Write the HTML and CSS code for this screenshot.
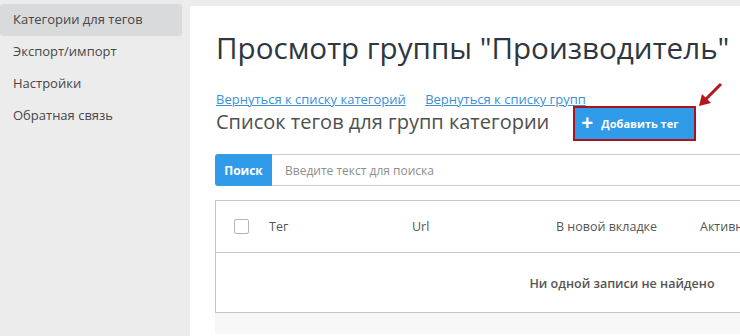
FILE: index.html
```html
<!DOCTYPE html>
<html>
<head lang="ru">
    <meta charset="UTF-8">
    <title>Просмотр группы</title>
    <link rel="stylesheet" href="styles.css">
</head>
<body>

<div class="sidebar">
    <a class="nav active" href="#">Категории для тегов</a>
    <a class="nav" href="#">Экспорт/импорт</a>
    <a class="nav" href="#">Настройки</a>
    <a class="nav" href="#">Обратная связь</a>
</div>

<div class="main">
    <h1 class="title">Просмотр группы "Производитель"</h1>

    <div class="links">
        <a href="#">Вернуться к списку категорий</a>
        <a href="#">Вернуться к списку групп</a>
    </div>

    <div class="head-row">
        <h2 class="subtitle">Список тегов для групп категории</h2>
        <button class="add-btn"><span class="plus">+</span>Добавить тег</button>
        <svg class="arrow" width="30" height="30" viewBox="0 0 30 30">
            <line x1="25" y1="3" x2="10" y2="18" stroke="#b3161c" stroke-width="3"/>
            <polygon points="3,25 6,13 15,22" fill="#b3161c"/>
        </svg>
    </div>

    <div class="search">
        <button class="search-btn">Поиск</button>
        <input type="text" class="search-input" placeholder="Введите текст для поиска">
    </div>

    <div class="grid">
        <table>
            <tr class="grid-head">
                <th class="c-check"><span class="checkbox"></span></th>
                <th class="c-tag">Тег</th>
                <th class="c-url">Url</th>
                <th class="c-tab">В новой вкладке</th>
                <th class="c-act">Активность</th>
            </tr>
            <tr>
                <td class="empty" colspan="5">Ни одной записи не найдено</td>
            </tr>
        </table>
    </div>
    <div class="grid-foot"></div>
</div>

</body>
</html>
```

FILE: styles.css
```css
*{
    margin: 0px;
    padding: 0px;
    box-sizing: border-box;
}
body{
    display: flex;
    background-color: #ececec;
    font-family: "Open Sans", "Liberation Sans", sans-serif;
    width: 740px;
    height: 336px;
    overflow: hidden;
}
.sidebar{
    width: 182px;
    flex-shrink: 0;
    padding-top: 4px;
}
.nav{
    display: block;
    height: 32px;
    line-height: 31px;
    padding-left: 13px;
    font-size: 13px;
    color: #474747;
    text-decoration: none;
}
.nav.active{
    background-color: #d9dadb;
    border-radius: 3px;
}
.main{
    margin: 6px 0px 0px 8px;
    width: 900px;
    flex-shrink: 0;
    background-color: white;
    padding: 20px 0px 0px 26px;
}
.title{
    font-size: 29.6px;
    font-weight: normal;
    color: #2e3641;
    line-height: 44px;
}
.links{
    margin-top: 20px;
    font-size: 13px;
    line-height: 18px;
}
.links a{
    color: #3d8fd6;
    margin-right: 16px;
}
.head-row{
    position: relative;
    display: flex;
    align-items: center;
    height: 36px;
    margin-top: -5px;
}
.subtitle{
    font-size: 20px;
    font-weight: normal;
    color: #4f4f4f;
}
.add-btn{
    margin-left: 24px;
    height: 35px;
    width: 123px;
    border: 2px solid #a8131d;
    background-color: #2f9be9;
    color: white;
    font-family: "Open Sans", "Liberation Sans", sans-serif;
    font-size: 11px;
    font-weight: bold;
    text-align: left;
    padding-left: 6px;
    margin-top: 5px;
}
.plus{
    font-size: 21px;
    line-height: 11px;
    margin-right: 8px;
    vertical-align: -2px;
}
.arrow{
    position: absolute;
    left: 480px;
    top: -22px;
}
.search{
    display: flex;
    margin-top: 15px;
    margin-left: -1px;
    height: 32px;
}
.search-btn{
    width: 57px;
    background-color: #2f9be9;
    color: white;
    border: none;
    border-radius: 3px 0px 0px 3px;
    font-family: "Open Sans", "Liberation Sans", sans-serif;
    font-size: 12px;
    font-weight: bold;
}
.search-input{
    width: 600px;
    border: 1px solid #cccccc;
    border-left: none;
    padding-left: 13px;
    font-family: "Open Sans", "Liberation Sans", sans-serif;
    font-size: 12px;
}
.search-input::placeholder{
    color: #8e8e8e;
}
.grid{
    margin-top: 14px;
    margin-left: -1px;
    width: 814px;
    border: 1px solid #c6c6c6;
}
table{
    width: 100%;
    border-collapse: collapse;
}
.grid-head th{
    height: 51px;
    font-size: 12.5px;
    font-weight: normal;
    color: #555555;
    text-align: left;
    border-bottom: 1px solid #c6c6c6;
}
.c-check{
    width: 53px;
    padding-left: 18px;
}
.checkbox{
    display: block;
    width: 15px;
    height: 15px;
    border: 1px solid #b5b5b5;
    border-radius: 2px;
}
.c-tag{
    width: 143px;
}
.c-url{
    width: 144px;
}
.c-tab{
    width: 144px;
}
.empty{
    height: 60px;
    padding-top: 2px;
    text-align: center;
    font-size: 12.5px;
    font-weight: 600;
    color: #555555;
}
.grid-foot{
    margin-left: -1px;
    width: 814px;
    height: 21px;
    background-color: #f7f7f7;
}
```
